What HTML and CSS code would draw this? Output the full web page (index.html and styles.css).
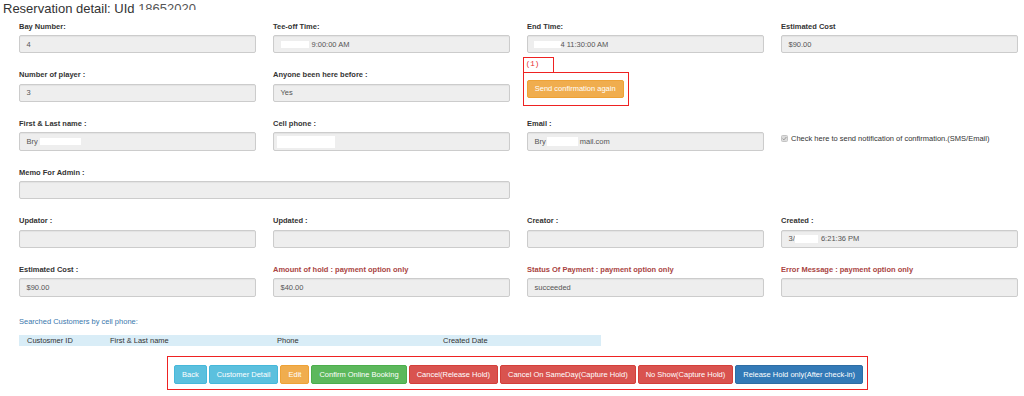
FILE: index.html
```html
<!DOCTYPE html>
<html>
<head>
<meta charset="utf-8">
<title>Reservation detail</title>
<link rel="stylesheet" href="styles.css">
</head>
<body>
<div class="page">
  <h3 class="title">Reservation detail: UId <span class="uid">18652020</span></h3>

  <div class="form-grid">
    <div class="group"><div class="lbl">Bay Number:</div><div class="fc">4</div></div>
    <div class="group"><div class="lbl">Tee-off Time:</div><div class="fc"><span class="redact r-tee"></span><span class="after-tee">9:00:00 AM</span></div></div>
    <div class="group"><div class="lbl">End Time:</div><div class="fc"><span class="redact r-end"></span><span>4 11:30:00 AM</span></div></div>
    <div class="group"><div class="lbl">Estimated Cost</div><div class="fc">$90.00</div></div>

    <div class="group"><div class="lbl">Number of player :</div><div class="fc">3</div></div>
    <div class="group"><div class="lbl">Anyone been here before :</div><div class="fc">Yes</div></div>
    <div class="group">
      <div class="anno-tag">(1)</div>
      <div class="anno-box"><button class="btn btn-warning btn-send">Send confirmation again</button></div>
    </div>
    <div class="group"></div>

    <div class="group"><div class="lbl">First &amp; Last name :</div><div class="fc"><span>Bry</span><span class="redact r-name"></span></div></div>
    <div class="group"><div class="lbl">Cell phone :</div><div class="fc"><span class="redact r-cell"></span></div></div>
    <div class="group"><div class="lbl">Email :</div><div class="fc"><span>Bry</span><span class="redact r-mail"></span><span class="after-mail">mail.com</span></div></div>
    <div class="group">
      <div class="check">
        <svg class="cbox" width="7" height="7" viewBox="0 0 7 7"><rect x="0.5" y="0.5" width="6" height="6" rx="1" fill="#dcdcdc" stroke="#c4c4c4"/><path d="M1.6 3.6 L2.9 4.9 L5.4 2" fill="none" stroke="#9a9a9a" stroke-width="1"/></svg>
        <span>Check here to send notification of confirmation.(SMS/Email)</span>
      </div>
    </div>

    <div class="group span2"><div class="lbl">Memo For Admin :</div><div class="fc"></div></div>
    <div class="group"></div>
    <div class="group"></div>

    <div class="group"><div class="lbl">Updator :</div><div class="fc"></div></div>
    <div class="group"><div class="lbl">Updated :</div><div class="fc"></div></div>
    <div class="group"><div class="lbl">Creator :</div><div class="fc"></div></div>
    <div class="group"><div class="lbl">Created :</div><div class="fc"><span>3/</span><span class="redact r-created"></span><span class="after-created">6:21:36 PM</span></div></div>

    <div class="group"><div class="lbl">Estimated Cost :</div><div class="fc">$90.00</div></div>
    <div class="group"><div class="lbl danger">Amount of hold : payment option only</div><div class="fc">$40.00</div></div>
    <div class="group"><div class="lbl danger">Status Of Payment : payment option only</div><div class="fc">succeeded</div></div>
    <div class="group"><div class="lbl danger">Error Message : payment option only</div><div class="fc"></div></div>
  </div>

  <div class="searched">Searched Customers by cell phone:</div>
  <table class="cust-table">
    <thead>
      <tr><th class="c1">Custosmer ID</th><th class="c2">First &amp; Last name</th><th class="c3">Phone</th><th class="c4">Created Date</th></tr>
    </thead>
  </table>

  <div class="bar-wrap">
    <div class="bar">
      <button class="btn btn-info">Back</button>
      <button class="btn btn-info">Customer Detail</button>
      <button class="btn btn-warning">Edit</button>
      <button class="btn btn-success">Confirm Online Booking</button>
      <button class="btn btn-danger">Cancel(Release Hold)</button>
      <button class="btn btn-danger">Cancel On SameDay(Capture Hold)</button>
      <button class="btn btn-danger">No Show(Capture Hold)</button>
      <button class="btn btn-primary">Release Hold only(After check-in)</button>
    </div>
  </div>
</div>
</body>
</html>
```

FILE: styles.css
```css
html, body {
  margin: 0;
  padding: 0;
  overflow: hidden;
  background: #fff;
}

body {
  font-family: "Liberation Sans", Arial, sans-serif;
  font-size: 7.5px;
  color: #333;
}

.page {
  width: 1024px;
}

.title {
  margin: 0;
  padding-left: 3px;
  font-size: 13px;
  line-height: 18px;
  font-weight: normal;
  color: #333;
  height: 18px;
  white-space: nowrap;
}

.uid {
  display: inline-block;
  height: 9.5px;
  overflow: hidden;
  vertical-align: top;
  line-height: 18px;
  color: #555;
}

.form-grid {
  display: grid;
  grid-template-columns: repeat(4, 237px);
  grid-auto-rows: 31.8px;
  column-gap: 17px;
  row-gap: 16.9px;
  margin: 3.6px 0 0 19px;
}

.span2 {
  grid-column: span 2;
}

.lbl {
  font-weight: bold;
  line-height: 10.7px;
  margin-bottom: 2.7px;
  white-space: nowrap;
  color: #333;
}

.lbl.danger {
  color: #a94442;
}

.fc {
  box-sizing: border-box;
  height: 18.4px;
  background: #eee;
  border: 1px solid #ccc;
  border-radius: 2px;
  box-shadow: inset 0 1px 1px rgba(0, 0, 0, 0.05);
  padding: 0 6.5px;
  display: flex;
  align-items: center;
  color: #555;
  white-space: nowrap;
}

.redact {
  display: inline-block;
  background: #fff;
}

.r-tee { width: 28px; height: 7px; }
.after-tee { margin-left: 3px; }
.r-end { width: 27px; height: 7px; margin-left: -1px; }
.r-name { width: 41px; height: 7px; margin-left: 2px; }
.r-cell { width: 58px; height: 12px; margin-left: -4px; }
.r-mail { width: 31.5px; height: 9px; margin-left: 1px; }
.after-mail { margin-left: 1.5px; }
.r-created { width: 22.7px; height: 8px; margin-left: 0.5px; }
.after-created { margin-left: 3px; }

.anno-tag {
  box-sizing: border-box;
  width: 31px;
  height: 15.7px;
  margin: -13.3px 0 0 -4.3px;
  border: 1px solid #ee2222;
  font-family: "Liberation Mono", "Courier New", monospace;
  font-size: 7.5px;
  line-height: 13.7px;
  padding-left: 2px;
  color: #e8282a;
}

.anno-box {
  box-sizing: border-box;
  width: 106px;
  height: 34px;
  margin: -1px 0 0 -4.3px;
  border: 1px solid #ee2222;
  padding: 7.3px 0 0 3px;
}

.btn {
  box-sizing: border-box;
  font-family: "Liberation Sans", Arial, sans-serif;
  font-size: 7.5px;
  color: #fff;
  height: 19px;
  line-height: 17px;
  padding: 0 7px;
  border: 1px solid transparent;
  border-radius: 2px;
  white-space: nowrap;
  margin: 0;
  cursor: pointer;
}

.btn-send {
  height: 18px;
  line-height: 16px;
}

.btn-info { background: #5bc0de; border-color: #46b8da; }
.btn-warning { background: #f0ad4e; border-color: #eea236; }
.btn-success { background: #5cb85c; border-color: #4cae4c; }
.btn-danger { background: #d9534f; border-color: #d43f3a; }
.btn-primary { background: #337ab7; border-color: #2e6da4; }

.check {
  display: flex;
  align-items: center;
  margin-top: 14.6px;
  line-height: 10.7px;
  white-space: nowrap;
}

.cbox {
  display: block;
  margin-right: 3px;
}

.searched {
  margin: 19.7px 0 0 19px;
  line-height: 10.7px;
  color: #3a78ad;
}

.cust-table {
  margin: 7.7px 0 0 19px;
  width: 582px;
  border-collapse: collapse;
  table-layout: fixed;
}

.cust-table th {
  background: #d9edf7;
  height: 11px;
  padding: 0 0 0 8px;
  font-weight: normal;
  text-align: left;
  line-height: 11px;
  color: #333;
  font-size: 7.5px;
}

.cust-table .c1 { width: 75px; }
.cust-table .c2 { width: 159px; }
.cust-table .c3 { width: 158px; }
.cust-table .c4 { width: 158px; }

.bar-wrap {
  display: flex;
  justify-content: center;
  padding-left: 11px;
  margin-top: 10px;
}

.bar {
  display: flex;
  gap: 2px;
  border: 1px solid #ee2222;
  padding: 8px 4px 5px 6px;
}
```
